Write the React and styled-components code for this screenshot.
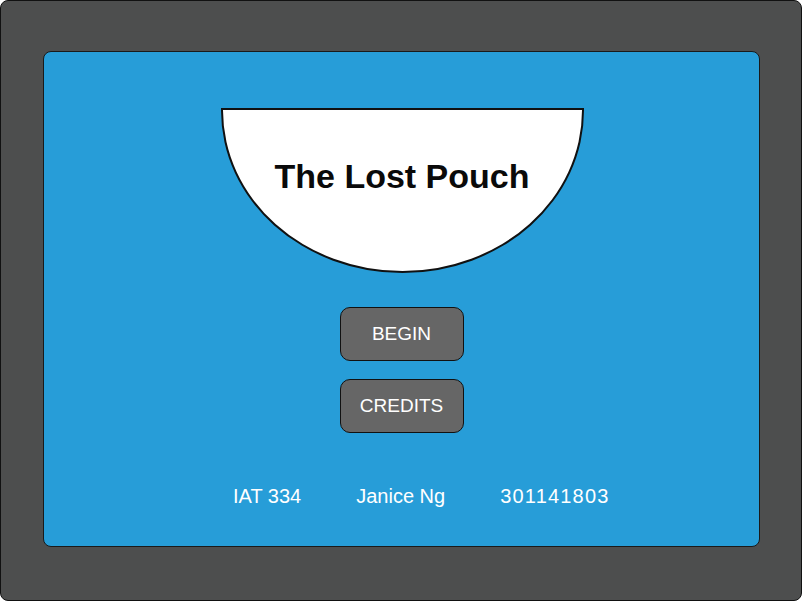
import React from "react";
import styled, { createGlobalStyle } from "styled-components";

const Global = createGlobalStyle`
  html, body {
    margin: 0;
    padding: 0;
    background: #ffffff;
  }
`;

const Frame = styled.div`
  box-sizing: border-box;
  width: 802px;
  height: 601px;
  background-color: #4d4e4e;
  border: 1px solid #111;
  border-radius: 8px;
  padding: 50px 41px 53px 42px;
  display: flex;
`;

const Panel = styled.div`
  box-sizing: border-box;
  flex: 1;
  background-color: #279dd8;
  border: 1px solid #1a1a1a;
  border-radius: 8px;
  padding-top: 56px;
  display: flex;
  flex-direction: column;
  align-items: center;
  font-family: "Liberation Sans", Arial, sans-serif;
`;

const Bowl = styled.div`
  box-sizing: border-box;
  width: 363px;
  height: 165px;
  margin-left: 1px;
  background-color: #fff;
  border: 2px solid #111;
  border-radius: 0 0 182px 182px / 0 0 163px 163px;
  display: flex;
  align-items: center;
  justify-content: center;
  padding-bottom: 28px;
`;

const Title = styled.h1`
  margin: 0;
  font-size: 34px;
  font-weight: bold;
  color: #0a0a0a;
`;

const Buttons = styled.div`
  display: flex;
  flex-direction: column;
  gap: 18px;
  margin-top: 34px;
`;

const MenuButton = styled.button`
  box-sizing: border-box;
  width: 124px;
  height: 54px;
  background-color: #666666;
  border: 1px solid #111;
  border-radius: 10px;
  color: #fff;
  font-family: "Liberation Sans", Arial, sans-serif;
  font-size: 19px;
  cursor: pointer;
`;

const Footer = styled.div`
  align-self: stretch;
  display: flex;
  gap: 55px;
  padding-left: 189px;
  margin-top: 52px;
  color: #fff;
  font-size: 20px;
`;

const FooterItem = styled.span`
  letter-spacing: ${({ spread }) => spread || 0}px;
`;

export default function App() {
  return (
    <>
      <Global />
      <Frame>
        <Panel>
          <Bowl>
            <Title>The Lost Pouch</Title>
          </Bowl>
          <Buttons>
            <MenuButton>BEGIN</MenuButton>
            <MenuButton>CREDITS</MenuButton>
          </Buttons>
          <Footer>
            <FooterItem>IAT 334</FooterItem>
            <FooterItem>Janice Ng</FooterItem>
            <FooterItem spread={1.2}>301141803</FooterItem>
          </Footer>
        </Panel>
      </Frame>
    </>
  );
}
